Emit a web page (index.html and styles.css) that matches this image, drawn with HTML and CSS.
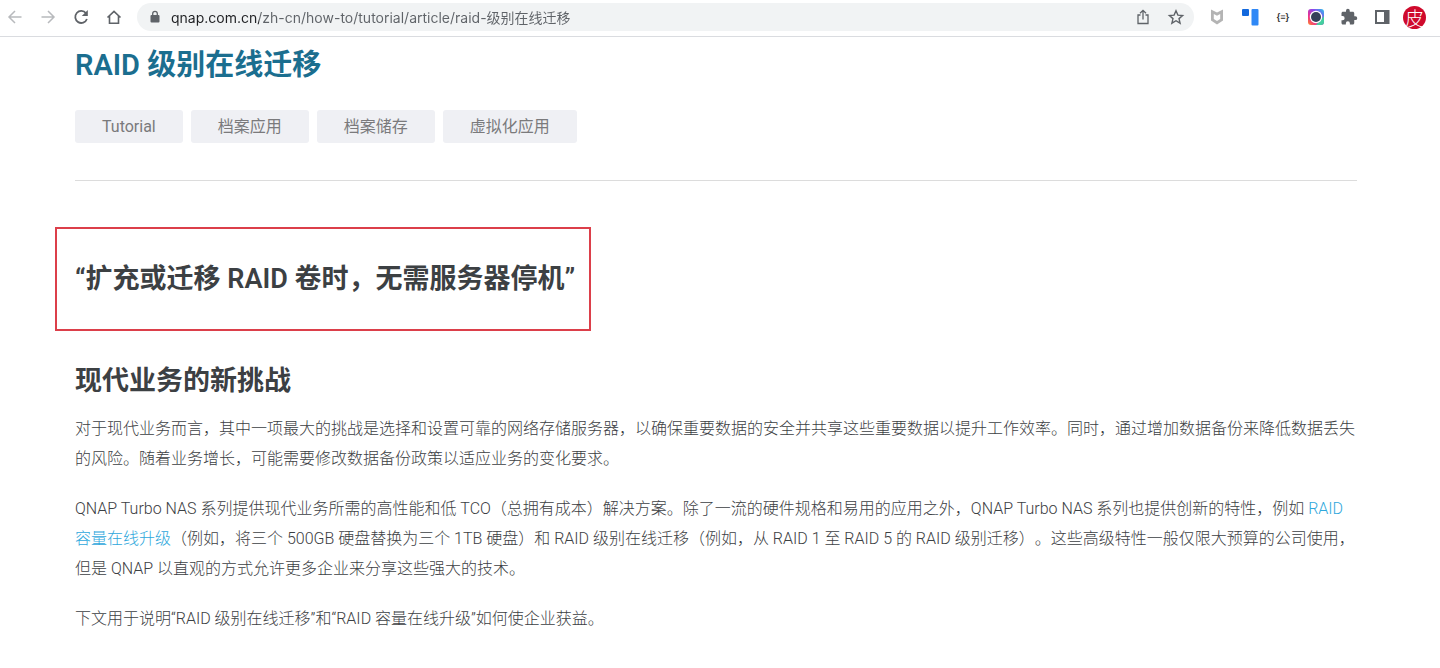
FILE: index.html
```html
<!DOCTYPE html>
<html lang="zh-CN">
<head>
  <meta charset="UTF-8" />
  <meta name="viewport" content="width=device-width, initial-scale=1.0"/>
  <title>RAID 级别在线迁移 | QNAP</title>
  <link rel="stylesheet" href="styles.css">
</head>
<body>

<header class="toolbar">
  <div class="nav-buttons">
    <button class="icon-btn faded" aria-label="Back">
      <svg width="18" height="18" viewBox="0 0 18 18" fill="none" stroke="currentColor" stroke-width="1.5"><path d="M15.5 9H3M9 3L3 9l6 6"/></svg>
    </button>
    <button class="icon-btn faded" aria-label="Forward">
      <svg width="18" height="18" viewBox="0 0 18 18" fill="none" stroke="currentColor" stroke-width="1.5"><path d="M2.500 9H15M9 3l6 6-6 6"/></svg>
    </button>
    <button class="icon-btn" aria-label="Reload">
      <svg width="18" height="18" viewBox="0 0 18 18"><path d="M14 5.300A6 6 0 1 0 14.900 11" fill="none" stroke="currentColor" stroke-width="1.800"/><path d="M15.800 2v6H9.800z" fill="currentColor"/></svg>
    </button>
    <button class="icon-btn" aria-label="Home">
      <svg width="18" height="18" viewBox="0 0 18 18" fill="none" stroke="currentColor" stroke-width="1.600"><path d="M2.500 9.500L9 3.300l6.500 6.200M4.500 8v7.200h9V8"/></svg>
    </button>
  </div>

  <div class="omnibox">
    <svg class="lock" width="12" height="14" viewBox="0 0 12 14"><rect x="1.500" y="5" width="9" height="7.500" rx="1" fill="#5f6368"/><path d="M3.700 5.500V3.600a2.300 2.300 0 0 1 4.600 0v1.900" fill="none" stroke="#5f6368" stroke-width="1.300"/></svg>
    <input class="url" type="text" aria-label="Address" value="qnap.com.cn/zh-cn/how-to/tutorial/article/raid-级别在线迁移">
    <button class="icon-btn" aria-label="Share">
      <svg width="18" height="18" viewBox="0 0 18 18" fill="none" stroke="currentColor" stroke-width="1.300"><path d="M6.500 7H4v8.500h10V7h-2.500M9 11.500V2.500M6 5.300l3-3 3 3"/></svg>
    </button>
    <button class="icon-btn" aria-label="Bookmark">
      <svg width="18" height="18" viewBox="0 0 18 18" fill="none" stroke="currentColor" stroke-width="1.400"><path d="M9 2.800l1.900 4.300 4.700.4-3.600 3.100 1.100 4.600L9 12.700l-4.100 2.500L6 10.600 2.400 7.500l4.700-.4z"/></svg>
    </button>
  </div>

  <div class="extensions">
    <button class="icon-btn" aria-label="WebAdvisor">
      <svg width="18" height="18" viewBox="0 0 18 18"><path d="M3 1.500l6 3 6-3v11L9 16.500l-6-4zM5.800 6v5L9 13l3.200-2V6L9 7.800z" fill="#b4b4b4" fill-rule="evenodd"/></svg>
    </button>
    <button class="icon-btn" aria-label="Translate">
      <svg width="18" height="18" viewBox="0 0 18 18"><rect x="1" y="1" width="7" height="7" rx="1" fill="#1268dd"/><rect x="10.500" y="1" width="7" height="16.500" rx="1" fill="#2f88f6"/></svg>
    </button>
    <button class="icon-btn json" aria-label="JSON viewer">{≡}</button>
    <button class="icon-btn" aria-label="Camera">
      <svg width="18" height="18" viewBox="0 0 18 18">
        <defs><linearGradient id="cam" x1="0" y1="1" x2="1" y2="0"><stop offset="0" stop-color="#ff8a2a"/><stop offset=".3" stop-color="#ec2f8c"/><stop offset=".65" stop-color="#8a4af0"/><stop offset="1" stop-color="#25c6e8"/></linearGradient></defs>
        <rect x="1" y="1" width="16" height="16" rx="3" fill="url(#cam)"/>
        <path d="M17 8v6a3 3 0 0 1-3 3H9z" fill="#43cfa0"/>
        <circle cx="9" cy="9" r="6.200" fill="#fff"/><circle cx="9" cy="9" r="5" fill="#35405a"/>
      </svg>
    </button>
    <button class="icon-btn" aria-label="Extensions">
      <svg width="18" height="18" viewBox="0 0 24 24" fill="currentColor"><path d="M20.500 11H19V7c0-1.100-.9-2-2-2h-4V3.500a2.500 2.500 0 0 0-5 0V5H4c-1.100 0-2 .9-2 2v3.800h1.500a2.700 2.700 0 0 1 0 5.400H2V20c0 1.100.9 2 2 2h3.800v-1.500a2.700 2.700 0 0 1 5.400 0V22H17c1.100 0 2-.9 2-2v-4h1.500a2.500 2.500 0 0 0 0-5z"/></svg>
    </button>
    <button class="icon-btn" aria-label="Side panel">
      <svg width="18" height="18" viewBox="0 0 18 18"><path d="M2 2h14.500v14H2zM4 4v10h7V4z" fill="currentColor" fill-rule="evenodd"/></svg>
    </button>
    <button class="avatar" aria-label="Profile">皮</button>
  </div>
</header>

<main class="article">
  <h1>RAID 级别在线迁移</h1>
  <ul class="tags">
    <li><a href="#">Tutorial</a></li>
    <li><a href="#">档案应用</a></li>
    <li><a href="#">档案储存</a></li>
    <li><a href="#">虚拟化应用</a></li>
  </ul>
  <hr>

  <h2 class="quote">“扩充或迁移 RAID 卷时，无需服务器停机”</h2>

  <h2>现代业务的新挑战</h2>
  <p>对于现代业务而言，其中一项最大的挑战是选择和设置可靠的网络存储服务器，以确保重要数据的安全并共享这些重要数据以提升工作效率。同时，通过增加数据备份来降低数据丢失的风险。随着业务增长，可能需要修改数据备份政策以适应业务的变化要求。</p>
  <p>QNAP Turbo NAS 系列提供现代业务所需的高性能和低 TCO（总拥有成本）解决方案。除了一流的硬件规格和易用的应用之外，QNAP Turbo NAS 系列也提供创新的特性，例如 <a href="#">RAID 容量在线升级</a>（例如，将三个 500GB 硬盘替换为三个 1TB 硬盘）和 RAID 级别在线迁移（例如，从 RAID 1 至 RAID 5 的 RAID 级别迁移）。这些高级特性一般仅限大预算的公司使用，但是 QNAP 以直观的方式允许更多企业来分享这些强大的技术。</p>
  <p>下文用于说明“RAID 级别在线迁移”和“RAID 容量在线升级”如何使企业获益。</p>
</main>

</body>
</html>
```
FILE: styles.css
```css
* {
  margin: 0;
  padding: 0;
  box-sizing: border-box;
}

body {
  font-family: Roboto, "Noto Sans CJK SC", sans-serif;
  background: #fff;
  color: #3c4043;
  text-spacing-trim: space-all;
}

button {
  border: none;
  background: none;
  cursor: pointer;
}

/* browser bar */
.toolbar {
  display: flex;
  align-items: center;
  height: 37px;
  padding: 0 14px 2px 6px;
  border-bottom: 1px solid #dadce0;
}

.nav-buttons {
  display: flex;
  gap: 15px;
}

.icon-btn {
  display: flex;
  align-items: center;
  justify-content: center;
  width: 18px;
  height: 18px;
  color: #5f6368;
}

.faded {
  color: #b8babd;
}

.omnibox {
  flex: 1;
  display: flex;
  align-items: center;
  gap: 15px;
  height: 28px;
  margin: 0 14px;
  padding: 0 9px 0 12px;
  border-radius: 14px;
  background: #f1f3f4;
}

.url {
  flex: 1;
  min-width: 0;
  margin-left: -5px;
  border: none;
  outline: none;
  font-family: Inter, "Noto Sans CJK SC", sans-serif;
  font-size: 14px;
  /* host part is darker than the path */
  background: linear-gradient(to right, #202124 88px, #5f6368 88px);
  -webkit-background-clip: text;
  background-clip: text;
  -webkit-text-fill-color: transparent;
}

.extensions {
  display: flex;
  align-items: center;
  gap: 15px;
}

.json {
  font: bold 9px "Liberation Sans", sans-serif;
  color: #333;
}

.avatar {
  width: 23px;
  height: 23px;
  margin-left: -3px;
  border-radius: 50%;
  background: #cf0a2c;
  color: #fff;
  font: 300 19px/23px "Noto Sans CJK SC", sans-serif;
}

/* article */
.article {
  padding: 7px 83px 24px 75px;
}

h1 {
  font-size: 29px;
  font-weight: 600;
  line-height: 42px;
  color: #1b6e8f;
}

.tags {
  display: flex;
  flex-wrap: wrap;
  gap: 8px;
  margin-top: 24px;
  list-style: none;
}

.tags a {
  display: block;
  padding: 0 27px;
  border-radius: 3px;
  background: #eff0f4;
  color: #7a7a7c;
  font-size: 16px;
  line-height: 33px;
  text-decoration: none;
}

hr {
  margin-top: 37px;
  border: none;
  border-top: 1px solid #dcdcdc;
}

h2 {
  margin: 30px 0 13px;
  font-size: 27px;
  font-weight: 600;
  line-height: 40px;
}

.quote {
  width: fit-content;
  margin: 46px 0 0 -20px;
  padding: 30px 14px 30px 18px;
  border: 2px solid #dc3f4a;
}

p {
  margin-bottom: 20px;
  font-size: 16px;
  font-weight: 300;
  line-height: 30px;
}

p a {
  color: #2ea7dc;
  text-decoration: none;
}
```
